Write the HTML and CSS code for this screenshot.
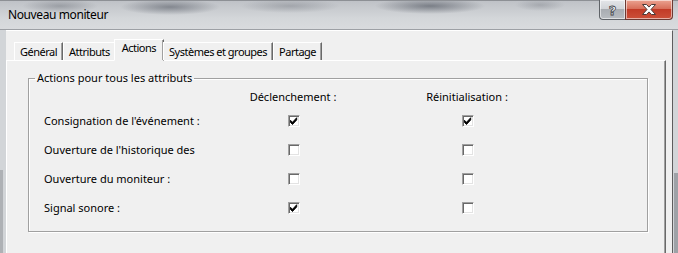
FILE: index.html
```html
<!DOCTYPE html>
<html lang="fr">
<head>
<meta charset="utf-8">
<title>Nouveau moniteur</title>
<link rel="stylesheet" href="styles.css">
</head>
<body>
<div class="window">
  <header class="titlebar">
    <span class="title">Nouveau moniteur</span>
    <div class="caption-buttons">
      <div class="cbtn help"><span class="qmark">?</span></div>
      <div class="cbtn close">
        <svg width="16" height="11" viewBox="0 0 16 11"><path d="M1.5 0.5h4l2.5 2.6 2.5-2.6h4l-4.5 5 4.5 5h-4l-2.5-2.6-2.5 2.6h-4l4.5-5z" fill="#fff" stroke="#4a3a38" stroke-width="1" stroke-linejoin="round"/></svg>
      </div>
    </div>
  </header>
  <div class="client">
    <div class="tabs">
      <div class="tab">Général</div>
      <div class="tab">Attributs</div>
      <div class="tab active">Actions</div>
      <div class="tab">Systèmes et groupes</div>
      <div class="tab">Partage</div>
    </div>
    <div class="panel">
      <fieldset class="group">
        <legend>Actions pour tous les attributs</legend>
        <div class="grid">
          <div class="corner"></div>
          <div class="colhead">Déclenchement :</div>
          <div class="spacer"></div>
          <div class="colhead">Réinitialisation :</div>

          <div class="label">Consignation de l'événement :</div>
          <div class="cell"><span class="check on"></span></div>
          <div class="spacer"></div>
          <div class="cell"><span class="check on"></span></div>

          <div class="label">Ouverture de l'historique des</div>
          <div class="cell"><span class="check"></span></div>
          <div class="spacer"></div>
          <div class="cell"><span class="check"></span></div>

          <div class="label">Ouverture du moniteur :</div>
          <div class="cell"><span class="check"></span></div>
          <div class="spacer"></div>
          <div class="cell"><span class="check"></span></div>

          <div class="label">Signal sonore :</div>
          <div class="cell"><span class="check on"></span></div>
          <div class="spacer"></div>
          <div class="cell"><span class="check"></span></div>
        </div>
      </fieldset>
    </div>
  </div>
</div>
</body>
</html>
```
FILE: styles.css
```css
html, body {
  margin: 0;
  padding: 0;
  background: #c4c7cb;
}
body {
  font-family: "Noto Sans", "Open Sans", sans-serif;
  font-size: 11px;
  color: #000;
}
.window {
  width: 678px;
  height: 253px;
  overflow: hidden;
  display: flex;
  flex-direction: column;
  background:
    linear-gradient(#aeb1b5, #aeb1b5) 0 170px / 3px 100% no-repeat,
    linear-gradient(#9ea2a7, #9ea2a7) 674px 173px / 4px 100% no-repeat,
    #d2d5d8;
}
.titlebar {
  box-sizing: border-box;
  height: 30px;
  border-top: 1px solid #8d9095;
  border-bottom: 1px solid #9da0a5;
  display: flex;
  align-items: flex-start;
  justify-content: space-between;
  background:
    radial-gradient(ellipse 38px 7px at 60px 5px, rgba(120,124,132,.55), transparent),
    radial-gradient(ellipse 50px 8px at 170px 6px, rgba(95,100,110,.65), transparent),
    radial-gradient(ellipse 50px 7px at 290px 5px, rgba(120,124,132,.45), transparent),
    radial-gradient(ellipse 55px 8px at 430px 5px, rgba(90,95,105,.7), transparent),
    radial-gradient(ellipse 25px 6px at 540px 4px, rgba(120,124,132,.4), transparent),
    linear-gradient(#bfc2c7, #d3d6d9 60%, #d9dbde);
}
.title {
  padding: 6px 0 0 8px;
  font-size: 12px;
  line-height: 16px;
  letter-spacing: -0.4px;
}
.caption-buttons {
  display: flex;
  margin-right: 5px;
  margin-top: -1px;
}
.cbtn {
  height: 19px;
  display: flex;
  align-items: center;
  justify-content: center;
  border: 1px solid #5f6368;
  border-top: none;
  box-shadow: inset 0 0 0 1px rgba(255,255,255,.55);
}
.help {
  width: 25px;
  border-radius: 0 0 0 4px;
  border-right: none;
  background: linear-gradient(#e4e6e9, #d2d5d9 45%, #a9adb2 50%, #b8bcc0);
}
.qmark {
  font-family: "DejaVu Sans", sans-serif;
  font-weight: bold;
  font-size: 13px;
  color: #fff;
  -webkit-text-stroke: 0.8px #3e4248;
  line-height: 1;
  margin-top: 1px;
}
.close {
  width: 46px;
  border-radius: 0 0 4px 0;
  border-color: #6c3a33;
  background: linear-gradient(#eba391, #d8705b 45%, #c23b27 50%, #cc5039);
}
.client {
  flex: 1;
  margin: 0 5px 0 6px;
  border-top: 1px solid #fff;
  border-right: 1px solid #5d5d5d;
  background: #f0f0f0;
  padding: 7px 6px 0 0;
  display: flex;
  flex-direction: column;
}
.tabs {
  display: flex;
  align-items: flex-end;
  height: 22px;
  padding-left: 8px;
  position: relative;
  z-index: 1;
}
.tab {
  height: 18px;
  box-sizing: border-box;
  line-height: 17px;
  padding: 0 5px;
  letter-spacing: -0.5px;
  border-top: 1px solid #fff;
  border-left: 1px solid #fff;
  border-right: 1px solid #696969;
  box-shadow: inset -1px 0 0 #a0a0a0;
  background: #f0f0f0;
  white-space: nowrap;
}
.tab.active {
  height: 22px;
  margin: 0 -1px -1px -2px;
  padding: 0 7px;
  line-height: 16px;
  border-bottom: 1px solid #f0f0f0;
}
.panel {
  flex: 1;
  border-top: 1px solid #fff;
  border-left: 1px solid #fff;
  border-right: 1px solid #696969;
  box-shadow: inset -1px 0 0 #a0a0a0;
  background: #f0f0f0;
}
.group {
  margin: 9px 17px 0 21px;
  padding: 2px 0 9px 15px;
  border: 1px solid #a0a0a0;
  box-shadow: 1px 1px 0 #fff, inset 1px 1px 0 #fff;
  min-width: 0;
}
.group legend {
  margin-left: -9px;
  padding: 0 2px;
  line-height: 16px;
  font-size: 11px;
}
.grid {
  display: grid;
  grid-template-columns: 201px 96px 78px 96px;
  grid-template-rows: 18px repeat(4, 29px);
  align-items: center;
}
.colhead {
  justify-self: center;
  white-space: nowrap;
  line-height: 16px;
}
.label {
  white-space: nowrap;
  line-height: 16px;
}
.cell {
  display: flex;
  justify-content: center;
  padding-left: 1px;
}
.check {
  display: block;
  width: 12px;
  height: 12px;
  box-sizing: border-box;
  background: #fff;
  border-top: 1px solid #a0a0a0;
  border-left: 1px solid #a0a0a0;
  border-right: 1px solid #fff;
  border-bottom: 1px solid #fff;
  box-shadow: inset 1px 1px 0 #696969, inset -1px -1px 0 #e3e3e3;
}
.check.on {
  background:
    url("data:image/svg+xml,%3Csvg xmlns='http://www.w3.org/2000/svg' width='10' height='10' viewBox='0 0 10 10'%3E%3Cpath d='M1.5 4.3l2 2 4.2-4.6v2.2l-4.2 4.6-2-2z' fill='%23000' stroke='%23000' stroke-width='.9'/%3E%3C/svg%3E") center / 10px 10px no-repeat,
    #fff;
}
```
